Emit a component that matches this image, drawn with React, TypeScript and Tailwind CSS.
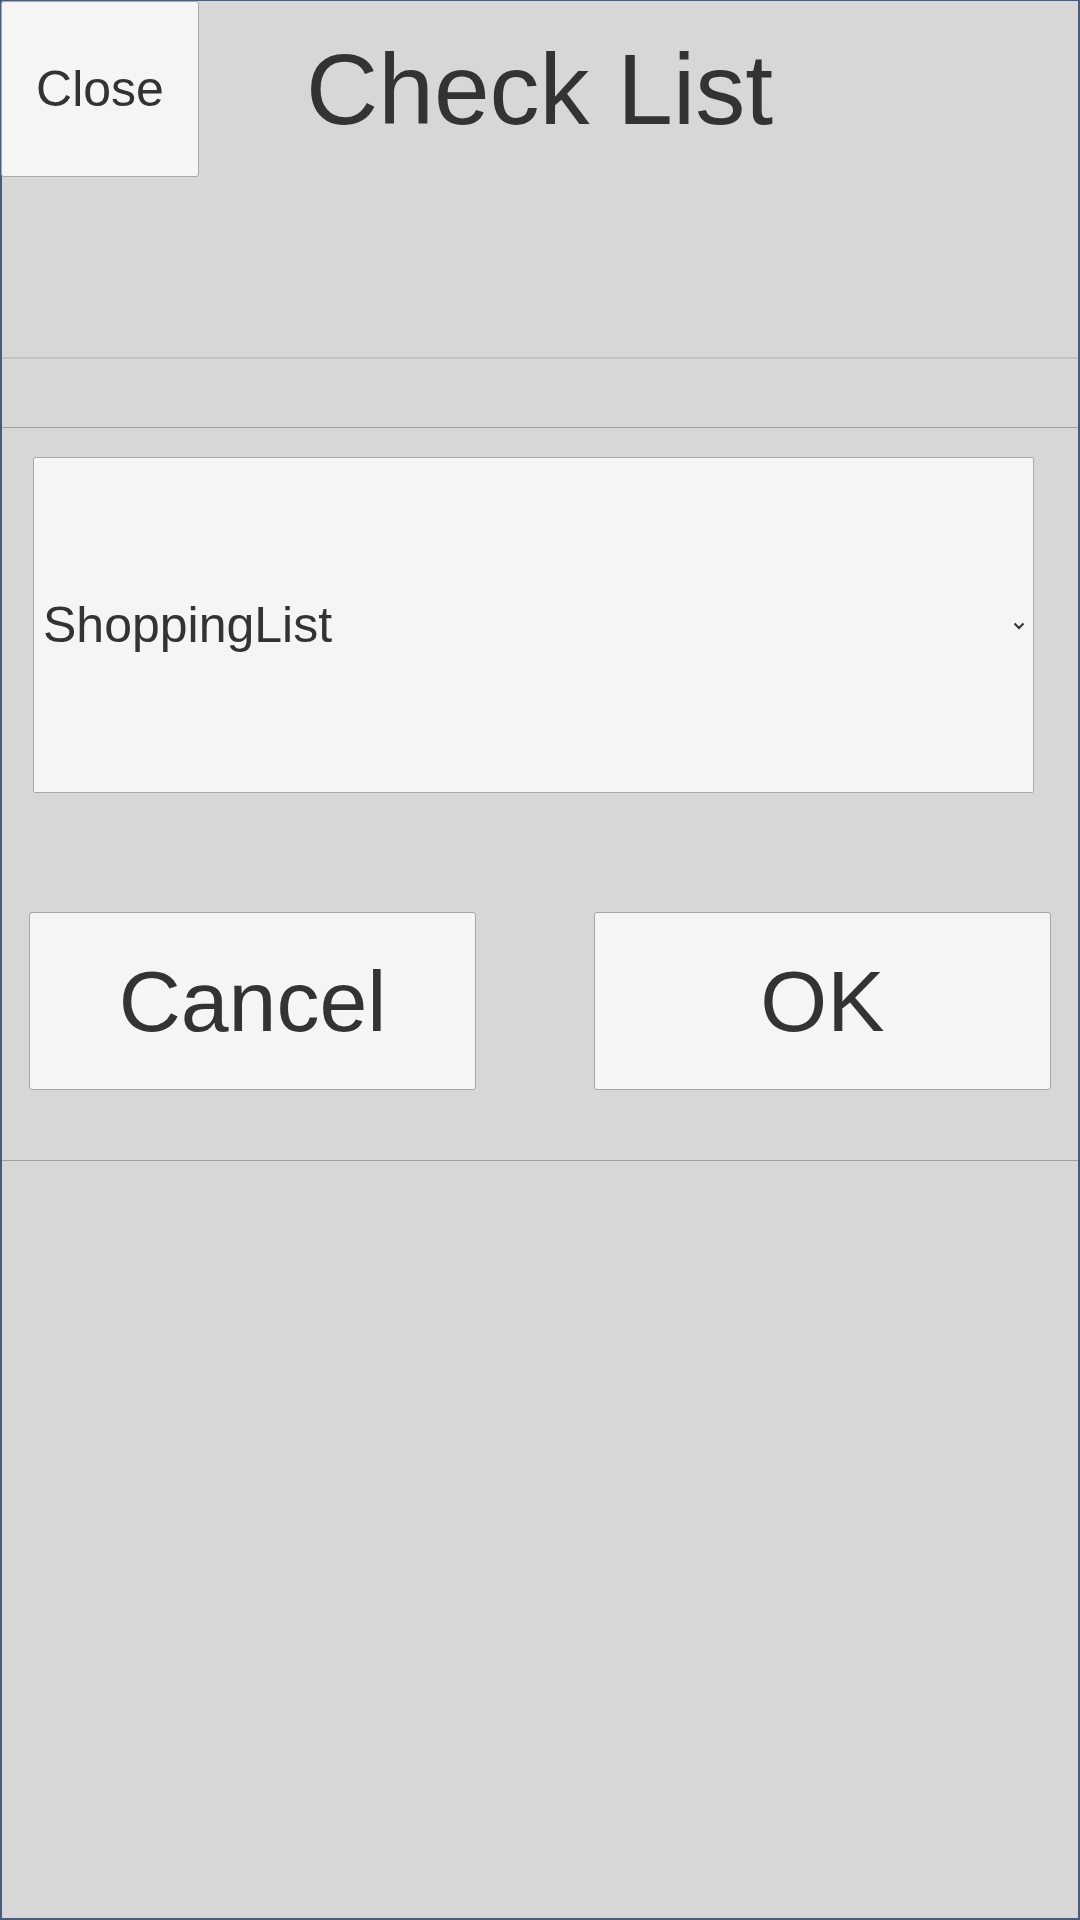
import React from "react";

export default function App() {
  return (
    <div
      className="w-[1080px] h-[1920px] bg-[#d7d7d7] border-[#4a5b7b] border-t border-x-2 border-b-2 flex flex-col text-[#333333]"
      style={{ fontFamily: '"Liberation Sans", Arial, sans-serif' }}
    >
      {/* Header */}
      <div className="h-[358px] shrink-0 border-b-2 border-[#c3c3c3] flex flex-col">
        <div className="grid grid-cols-[198px_1fr_198px] h-[176px] items-center -ml-[1px]">
          <button className="h-[176px] w-[198px] bg-[#f5f5f5] border border-[#a8a8a8] rounded-[3px] text-[50px] leading-none text-[#333333]">
            Close
          </button>
          <div className="text-center text-[100px] leading-none">Check List</div>
          <div />
        </div>
      </div>

      {/* Panel */}
      <div className="mt-[68px] h-[734px] shrink-0 border-y border-[#a0a0a0] flex flex-col">
        <div className="mt-[29px] ml-[31px] w-[1001px] h-[336px] bg-[#f5f5f5] border border-[#a9a9a9] rounded-[2px] flex items-center pl-[9px] pr-[8px]">
          <span className="flex-1 text-[50px] leading-none">ShoppingList</span>
          <svg width="12" height="8" viewBox="0 0 12 8" className="mt-[1px]">
            <path d="M1.5 1.5 L6 6 L10.5 1.5" fill="none" stroke="#333333" strokeWidth="2" />
          </svg>
        </div>
        <div className="mt-[119px] flex justify-between px-[27px]">
          <button className="w-[447px] h-[178px] bg-[#f5f5f5] border border-[#a6a6a6] rounded-[3px] text-[86px] leading-none text-[#333333]">
            Cancel
          </button>
          <button className="w-[457px] h-[178px] bg-[#f5f5f5] border border-[#a6a6a6] rounded-[3px] text-[86px] leading-none text-[#333333]">
            OK
          </button>
        </div>
      </div>
    </div>
  );
}
